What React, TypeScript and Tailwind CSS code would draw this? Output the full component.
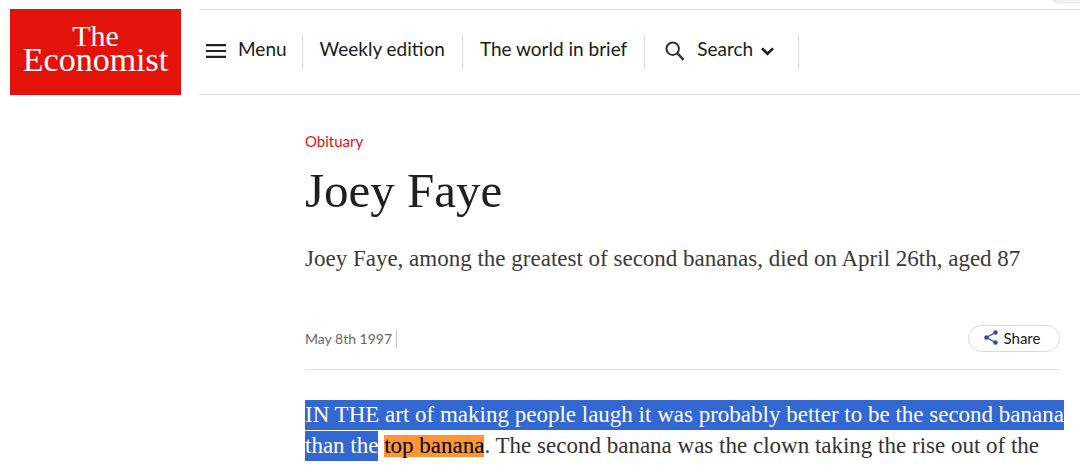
import React from "react";

function MenuIcon() {
  return (
    <svg width="20" height="14" viewBox="0 0 20 14" aria-hidden="true">
      <path d="M0 1.2h20M0 7h20M0 12.8h20" stroke="#222" strokeWidth="2.2" />
    </svg>
  );
}

function SearchIcon() {
  return (
    <svg width="20" height="20" viewBox="0 0 20 20" fill="none" stroke="#333" aria-hidden="true">
      <circle cx="7.7" cy="7.7" r="6.2" strokeWidth="2" />
      <path d="M12.2 12.2l6.4 6.6" strokeWidth="2.4" />
    </svg>
  );
}

function ChevronIcon() {
  return (
    <svg width="13" height="9" viewBox="0 0 13 9" fill="none" aria-hidden="true">
      <path d="M1 1.4l5.5 5.4L12 1.4" stroke="#1a1a1a" strokeWidth="2.6" />
    </svg>
  );
}

function ShareIcon() {
  return (
    <svg width="14" height="15" viewBox="0 0 14 15" aria-hidden="true">
      <path d="M11.5 2.5L2.4 7.5l9.1 5" fill="none" stroke="#2e45b8" strokeWidth="1.3" />
      <g fill="#2e45b8">
        <circle cx="11.5" cy="2.5" r="2.2" />
        <circle cx="2.4" cy="7.5" r="2.2" />
        <circle cx="11.5" cy="12.5" r="2.2" />
      </g>
    </svg>
  );
}

function Header() {
  return (
    <header className="flex gap-[18px] pt-[9px] pl-[10px]">
      <a
        href="#home"
        className="flex h-[86px] w-[171px] shrink-0 flex-col items-center justify-center bg-[#e3120b] pb-2 font-['Liberation_Serif',serif] text-[34px] leading-[24px] text-white"
      >
        <span className="text-[30px]">The</span>
        <span>Economist</span>
      </a>
      <nav className="flex grow items-center border-y border-[#e1e1e1] text-[19px] leading-6 whitespace-nowrap text-[#1a1a1a]">
        <div className="flex h-[35px] items-center border-r border-[#dcdcdc] pr-[15px] pl-[7px]">
          <button className="flex items-center gap-3 pb-1.5">
            <span className="pt-1"><MenuIcon /></span>
            Menu
          </button>
        </div>
        <div className="flex h-[35px] items-center border-r border-[#dcdcdc] px-[17px]">
          <a href="#weekly" className="pb-1.5">Weekly edition</a>
        </div>
        <div className="flex h-[35px] items-center border-r border-[#dcdcdc] px-[17px]">
          <a href="#brief" className="pb-1.5">The world in brief</a>
        </div>
        <div className="flex h-[35px] items-center border-r border-[#dcdcdc] pr-6 pl-5">
          <button className="flex items-center pb-1.5">
            <span className="pt-1 pr-3"><SearchIcon /></span>
            Search
            <span className="pt-1 pl-2"><ChevronIcon /></span>
          </button>
        </div>
      </nav>
    </header>
  );
}

export default function App() {
  return (
    <div className="relative overflow-hidden bg-white font-[Lato,sans-serif]">
      <div className="absolute -top-4 -right-3 h-[18px] w-[42px] rounded-full bg-[#f3f3f3] shadow-sm" />
      <Header />
      <main className="mr-4 ml-[305px] pt-9">
        <p className="text-[15px] leading-5 text-[#e3120b]">Obituary</p>
        <h1 className="mt-3 font-['Liberation_Serif',serif] text-[49px] leading-[56px] text-[#1f1f1f]">Joey Faye</h1>
        <p className="mt-6 font-['Liberation_Serif',serif] text-[23px] leading-[31px] whitespace-nowrap text-[#3a3a3a]">
          Joey Faye, among the greatest of second bananas, died on April 26th, aged 87
        </p>
        <div className="mt-[51px] mr-1 flex items-center justify-between border-b border-[#e1e1e1] pb-[17px]">
          <time dateTime="1997-05-08" className="border-r border-[#b5c3dc] pr-1 text-[14px] leading-[18px] text-[#666]">
            May 8th 1997
          </time>
          <button className="flex h-[27px] w-[92px] items-center justify-center gap-1.5 rounded-full border border-[#dcdcdc] pr-1 pb-0.5 text-[15px] leading-5 text-[#1a1a1a]">
            <ShareIcon />
            Share
          </button>
        </div>
        <p className="mt-[30px] font-['Liberation_Serif',serif] text-[23px] leading-[30px] whitespace-nowrap text-[#333]">
          <span className="inline-block bg-[#3367d1] text-white">
            IN THE art of making people laugh it was probably better to be the second banana
          </span>
          <br />
          <span className="mt-px inline-block bg-[#3367d1] text-white">than the</span>{" "}
          <mark className="inline-block bg-[#ff9632] leading-[22px] text-black">top banana</mark>. The second banana was the clown taking the rise out of the
        </p>
      </main>
    </div>
  );
}
